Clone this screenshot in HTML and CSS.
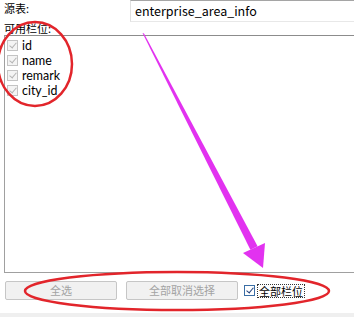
FILE: index.html
```html
<!DOCTYPE html>
<html lang="zh-CN">
<head>
  <meta charset="UTF-8" />
  <meta name="viewport" content="width=device-width, initial-scale=1.0" />
  <title>选择栏位</title>
  <link rel="stylesheet" href="styles.css">
</head>
<body>
  <div class="dialog">
    <div class="source-row">
      <span class="label">源表:</span>
      <div class="source-input">enterprise_area_info</div>
    </div>
    <div class="fields-label">可用栏位:</div>
    <div class="field-list">
      <div class="field"><span class="check"></span>id</div>
      <div class="field"><span class="check"></span>name</div>
      <div class="field"><span class="check"></span>remark</div>
      <div class="field"><span class="check"></span>city_id</div>
    </div>
    <div class="actions">
      <button class="btn" disabled>全选</button>
      <button class="btn" disabled>全部取消选择</button>
      <div class="all-fields">
        <span class="check on"></span>
        <span class="focus">全部栏位</span>
      </div>
    </div>
    <div class="status-strip"></div>

    <svg class="marks" width="354" height="317" viewBox="0 0 354 317">
      <ellipse cx="35" cy="64" rx="37" ry="42" fill="none" stroke="#e2252b" stroke-width="2.5" />
      <ellipse cx="177" cy="291" rx="152" ry="19" fill="none" stroke="#e2252b" stroke-width="2.5" />
      <polygon points="142.5,33 144,33.5 257.6,246.2 250.4,249.8" fill="#e232f0" />
      <polygon points="243,253 265,243 263,268" fill="#e232f0" />
    </svg>
  </div>
</body>
</html>
```

FILE: styles.css
```css
body {
  margin: 0;
  background-color: #fff;
  color: #000;
  font-family: "Noto Sans CJK SC", sans-serif;
  font-size: 12px;
  overflow: hidden;
}
.dialog {
  position: relative;
  width: 354px;
  height: 317px;
  overflow: hidden;
}
.source-row {
  display: flex;
  height: 22px;
}
.source-row .label {
  font-size: 11px;
  line-height: 16px;
  padding-left: 4px;
  width: 126px;
}
.source-input {
  flex: 1;
  margin-right: -10px;
  border-top: 1px solid #a5a5a5;
  border-left: 1px solid #e0e0e0;
  border-bottom: 1px solid #e8e8e8;
  box-sizing: border-box;
  padding-left: 4px;
  font-size: 12.5px;
  line-height: 19px;
}
.fields-label {
  font-size: 11px;
  line-height: 13px;
  padding-left: 4px;
}
.field-list {
  margin-left: 4px;
  margin-right: -10px;
  height: 238px;
  box-sizing: border-box;
  border: 1px solid #a0a0a0;
  border-top-color: #8c8c8c;
  padding: 2px 0 0 1px;
}
.field {
  display: flex;
  align-items: center;
  height: 15px;
  line-height: 15px;
  font-family: Lato, "Noto Sans CJK SC", sans-serif;
  font-size: 12.4px;
  gap: 4px;
}
.check {
  position: relative;
  width: 11px;
  height: 11px;
  box-sizing: border-box;
  border: 1px solid #c4c4c4;
  background-color: #f4f4f4;
  margin-left: 1px;
}
.check::after {
  content: "";
  position: absolute;
  left: 3px;
  top: 0px;
  width: 3px;
  height: 6px;
  border: solid #b4b4b4;
  border-width: 0 1.5px 1.5px 0;
  transform: rotate(40deg);
}
.check.on {
  border-color: #3a6ea5;
  background-color: #fff;
}
.check.on::after {
  border-color: #1f3f7a;
}
.actions {
  display: flex;
  align-items: center;
  margin-top: 8px;
  padding-left: 5px;
  height: 19px;
}
.btn {
  width: 112px;
  height: 19px;
  margin-right: 9px;
  border: 1px solid #c6c6c6;
  border-radius: 2px;
  background-color: #f1f1f1;
  color: #a3a3a3;
  font-family: "Noto Sans CJK SC", sans-serif;
  font-size: 11px;
  line-height: 17px;
  padding: 0;
}
.btn + .btn {
  margin-right: 6px;
}
.all-fields {
  display: flex;
  align-items: center;
  gap: 3px;
  font-size: 11px;
}
.all-fields .check {
  margin-left: 0;
}
.all-fields .focus {
  outline: 1px dotted #333;
  line-height: 12px;
  padding: 0 1px;
}
.status-strip {
  margin-top: 13px;
  height: 5px;
  background-color: #efefef;
}
.marks {
  position: absolute;
  left: 0;
  top: 0;
  pointer-events: none;
}
```
